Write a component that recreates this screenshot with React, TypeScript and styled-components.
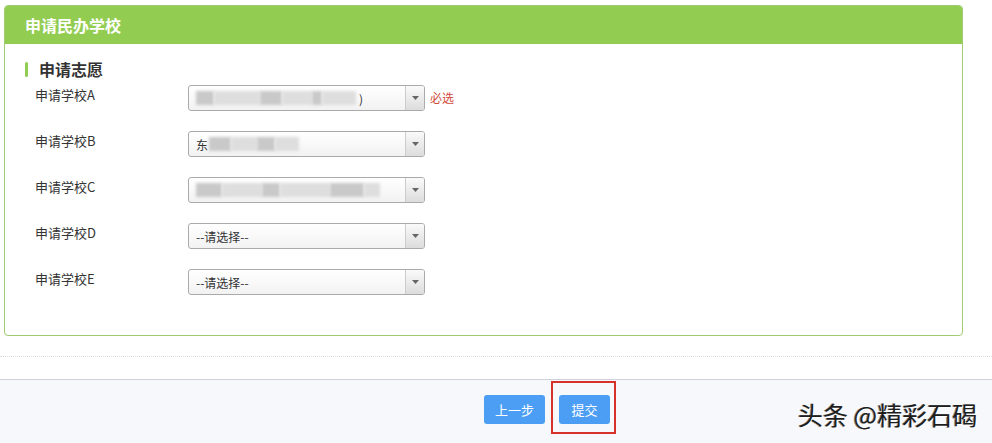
import React from 'react';
import styled, { createGlobalStyle } from 'styled-components';

const GlobalStyle = createGlobalStyle`
  html, body {
    margin: 0;
    padding: 0;
    background: #fff;
    font-family: "Noto Sans CJK SC", "Liberation Sans", sans-serif;
    color: #333;
  }
`;

type Choice = {
  label: string;
  value?: string;
  blur?: number[];
  lead?: string;
  tail?: string;
  required?: boolean;
};

const choices: Choice[] = [
  { label: '申请学校A', blur: [18, 46, 22, 30, 10, 34], tail: ')', required: true },
  { label: '申请学校B', lead: '东', blur: [22, 26, 18, 24] },
  { label: '申请学校C', blur: [26, 40, 18, 50, 34, 16] },
  { label: '申请学校D', value: '--请选择--' },
  { label: '申请学校E', value: '--请选择--' },
];

const App: React.FC<{}> = () => {
  return (
    <Page>
      <GlobalStyle />
      <Panel>
        <PanelHeader>申请民办学校</PanelHeader>
        <PanelBody>
          <SectionTitle>申请志愿</SectionTitle>
          {choices.map((c) => (
            <Row key={c.label}>
              <Label>{c.label}</Label>
              <Select>
                <SelectText>
                  {c.lead && <Lead>{c.lead}</Lead>}
                  {c.blur &&
                    c.blur.map((w, i) => (
                      <Mosaic key={i} style={{ width: w }} $shade={i % 2 === 0 ? '#c9c9c9' : '#dedede'} />
                    ))}
                  {c.tail && <Tail>{c.tail}</Tail>}
                  {c.value}
                </SelectText>
                <Arrow>
                  <svg width="7" height="4" viewBox="0 0 7 4">
                    <path d="M0 0 L7 0 L3.5 4 Z" fill="#666" />
                  </svg>
                </Arrow>
              </Select>
              {c.required && <Required>必选</Required>}
            </Row>
          ))}
        </PanelBody>
      </Panel>
      <Dotted />
      <Footer>
        <Button $width={61}>上一步</Button>
        <Highlight>
          <Button $width={51}>提交</Button>
        </Highlight>
        <Watermark>头条 @精彩石碣</Watermark>
      </Footer>
    </Page>
  );
};

export default App;

const Page = styled.div`
  width: 992px;
  height: 443px;
  overflow: hidden;
  padding-top: 5px;
  box-sizing: border-box;
`;

const Panel = styled.div`
  margin: 0 29px 0 4px;
  height: 331px;
  box-sizing: border-box;
  border: 1px solid #9fcb72;
  border-radius: 4px;
  overflow: hidden;
`;

const PanelHeader = styled.div`
  height: 38px;
  background: #92cd52;
  color: #fff;
  font-size: 16px;
  font-weight: bold;
  line-height: 38px;
  padding-left: 20px;
`;

const PanelBody = styled.div`
  padding: 15px 0 0 20px;
`;

const SectionTitle = styled.div`
  display: flex;
  align-items: center;
  gap: 11px;
  height: 20px;
  font-size: 16px;
  font-weight: bold;
  color: #333;
  margin-bottom: 6px;

  &::before {
    content: '';
    width: 3px;
    height: 15px;
    border-radius: 2px;
    background: #92cd52;
  }
`;

const Row = styled.div`
  display: flex;
  align-items: flex-start;
  height: 26px;
  padding-left: 10px;
  margin-bottom: 20px;
`;

const Label = styled.div`
  width: 153px;
  font-size: 13px;
  line-height: 18px;
  margin-top: 1px;
  color: #333;
`;

const Select = styled.div`
  display: flex;
  width: 237px;
  height: 26px;
  box-sizing: border-box;
  border: 1px solid #aaa;
  border-radius: 3px;
  background: linear-gradient(#ffffff, #f2f2f2);
  overflow: hidden;
`;

const SelectText = styled.div`
  flex: 1;
  display: flex;
  align-items: center;
  padding-left: 7px;
  font-size: 12px;
  color: #333;
  overflow: hidden;
  white-space: nowrap;
`;

const Lead = styled.span`
  margin-right: 1px;
`;

const Tail = styled.span`
  margin-left: 3px;
`;

const Mosaic = styled.span<{ $shade: string }>`
  display: inline-block;
  height: 14px;
  background: ${(p) => p.$shade};
  filter: blur(1.5px);
`;

const Arrow = styled.div`
  width: 18px;
  display: flex;
  align-items: center;
  justify-content: center;
  border-left: 1px solid #ccc;
  background: linear-gradient(#fafafa, #dcdcdc);
`;

const Required = styled.span`
  margin-left: 5px;
  margin-top: 4px;
  font-size: 12px;
  color: #d04a3a;
`;

const Dotted = styled.div`
  margin-top: 20px;
  border-top: 1px dotted #ddd;
`;

const Footer = styled.div`
  position: relative;
  margin-top: 22px;
  height: 64px;
  border-top: 1px solid #cfd1dc;
  background: #f7f8fc;
  display: flex;
  align-items: flex-start;
  padding: 15px 0 0 484px;
  box-sizing: border-box;
`;

const Button = styled.button<{ $width: number }>`
  width: ${(p) => p.$width}px;
  height: 29px;
  padding: 0;
  border: none;
  border-radius: 3px;
  background: #4b9ef4;
  color: #fff;
  font-family: "Noto Sans CJK SC", sans-serif;
  font-size: 13px;
`;

const Highlight = styled.div`
  margin: -14px 0 0 6px;
  padding: 12px 4px 8px 6px;
  border: 2px solid #d6322b;
  display: flex;
`;

const Watermark = styled.div`
  position: absolute;
  left: 798px;
  top: 19px;
  font-size: 25px;
  line-height: 30px;
  color: #1e1e1e;
  text-shadow: 1px 1px 0 #fff, -1px 0 0 #888;
`;
